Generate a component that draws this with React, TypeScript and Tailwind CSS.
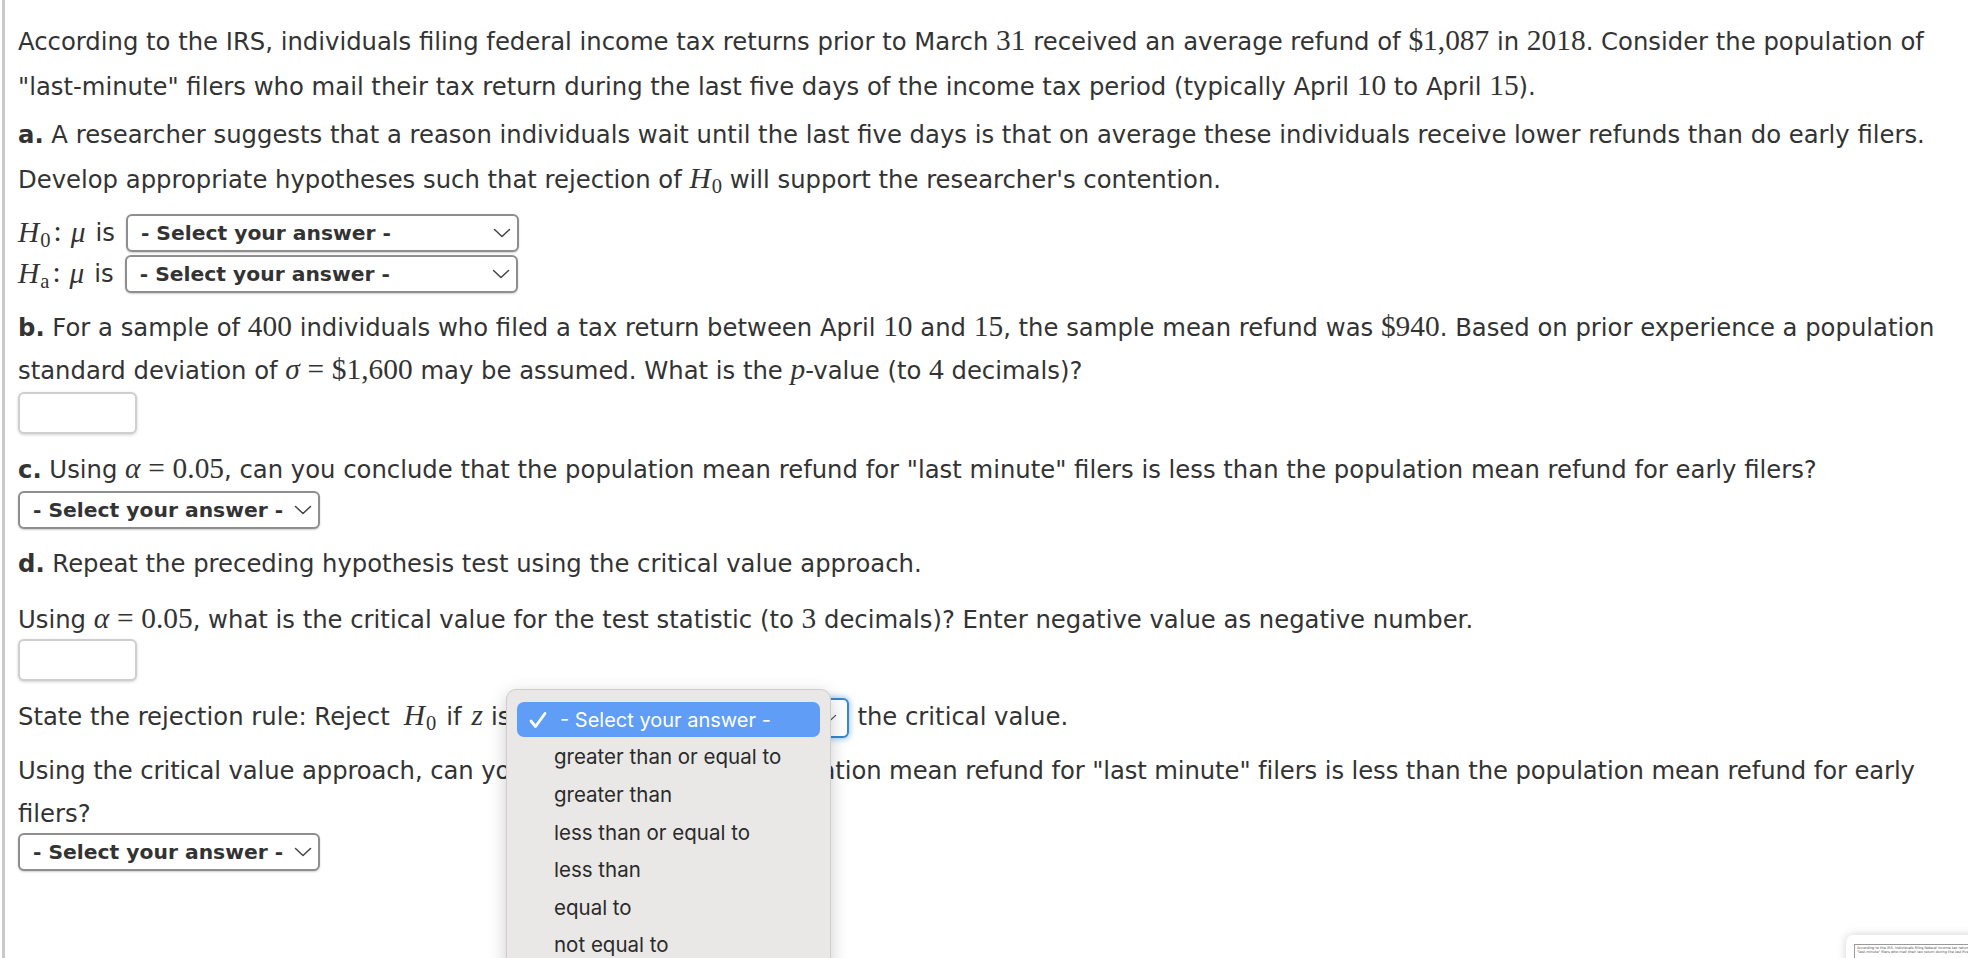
import React from "react";

const body = { fontFamily: '"DejaVu Sans", Verdana, sans-serif' };
const mathFont = { fontFamily: '"Liberation Serif", "DejaVu Serif", serif' };
const uiFont = { fontFamily: 'Inter, "Liberation Sans", sans-serif' };

// upright math (numbers, signs)
function N({ children }: { children: React.ReactNode }) {
  return (
    <span className="text-[1.21em] leading-none" style={mathFont}>
      {children}
    </span>
  );
}

// italic math variable
function V({ children, sub }: { children: React.ReactNode; sub?: string }) {
  return (
    <span className="text-[1.21em] leading-none italic" style={mathFont}>
      {children}
      {sub && <span className="not-italic text-[0.7em] relative top-[0.22em] ml-[1px]">{sub}</span>}
    </span>
  );
}

function Chevron({ className = "" }: { className?: string }) {
  return (
    <svg width="18" height="10" viewBox="0 0 18 10" className={className} fill="none">
      <path d="M1.5 1.5l7.5 7 7.5-7" stroke="#444" strokeWidth="1.5" strokeLinecap="round" strokeLinejoin="round" />
    </svg>
  );
}

function Select({ width }: { width: string }) {
  return (
    <span
      className={`inline-flex shrink-0 items-center justify-between h-[38px] ${width} rounded-[6px] border-2 border-[#8e8e8e] bg-white pl-[13px] pr-[6px] shadow-[0_1px_2px_rgba(0,0,0,0.2)]`}
    >
      <span className="font-bold text-[20.3px] text-[#333] whitespace-nowrap">- Select your answer -</span>
      <Chevron />
    </span>
  );
}

function Input() {
  return (
    <div className="w-[119px] h-[42px] rounded-[6px] border-2 border-[#cfcfcf] bg-white shadow-[0_1px_3px_rgba(0,0,0,0.18)]" />
  );
}

function HypRow({ sub }: { sub: string }) {
  return (
    <div className="h-[38px] flex items-center whitespace-nowrap">
      <V sub={sub}>H</V>
      <span className="ml-[3px] mr-[9px]">
        <N>:</N>
      </span>
      <V>μ</V>
      <span className="ml-[10px] mr-[11px]">is</span>
      <Select width="w-[393px]" />
    </div>
  );
}

const options = [
  "greater than or equal to",
  "greater than",
  "less than or equal to",
  "less than",
  "equal to",
  "not equal to",
];

export default function App() {
  return (
    <div className="relative w-[1968px] h-[958px] overflow-hidden bg-white pl-[2px] text-[#333]" style={body}>
      <div className="h-full border-l-[3px] border-[#cacaca] pl-[13px] pt-[19px] text-[24.3px]">
        <div className="leading-[45px] whitespace-nowrap">
          <div>
            According to the IRS, individuals filing federal income tax returns prior to March <N>31</N> received an
            average refund of <N>$1,087</N> in <N>2018</N>. Consider the population of
          </div>
          <div>
            "last-minute" filers who mail their tax return during the last five days of the income tax period
            (typically April <N>10</N> to April <N>15</N>).
          </div>
        </div>

        <div className="mt-[3px] leading-[45px] whitespace-nowrap">
          <div>
            <b>a.</b> A researcher suggests that a reason individuals wait until the last five days is that on average
            these individuals receive lower refunds than do early filers.
          </div>
          <div>
            Develop appropriate hypotheses such that rejection of <V sub="0">H</V> will support the researcher's
            contention.
          </div>
        </div>

        <div className="mt-[12px]">
          <HypRow sub="0" />
        </div>
        <div className="mt-[3px]">
          <HypRow sub="a" />
        </div>

        <div className="mt-[13px] leading-[43px] whitespace-nowrap">
          <div>
            <b>b.</b> For a sample of <N>400</N> individuals who filed a tax return between April <N>10</N> and{" "}
            <N>15</N>, the sample mean refund was <N>$940</N>. Based on prior experience a population
          </div>
          <div>
            standard deviation of <V>σ</V> <N>=</N> <N>$1,600</N> may be assumed. What is the <V>p</V>-value (to{" "}
            <N>4</N> decimals)?
          </div>
        </div>
        <Input />

        <div className="mt-[14px] leading-[43px] whitespace-nowrap">
          <b>c.</b> Using <V>α</V> <N>=</N> <N>0.05</N>, can you conclude that the population mean refund for "last
          minute" filers is less than the population mean refund for early filers?
        </div>
        <div className="flex">
          <Select width="w-[302px]" />
        </div>

        <div className="mt-[13px] leading-[43px] whitespace-nowrap">
          <b>d.</b> Repeat the preceding hypothesis test using the critical value approach.
        </div>
        <div className="mt-[13px] leading-[43px] whitespace-nowrap">
          Using <V>α</V> <N>=</N> <N>0.05</N>, what is the critical value for the test statistic (to <N>3</N>{" "}
          decimals)? Enter negative value as negative number.
        </div>
        <div className="-mt-[2px]">
          <Input />
        </div>

        <div className="mt-[15px] h-[43px] flex items-center whitespace-nowrap">
          <span>State the rejection rule: Reject</span>
          <span className="ml-[14px]">
            <V sub="0">H</V>
          </span>
          <span className="ml-[10px]">if</span>
          <span className="ml-[10px]">
            <V>z</V>
          </span>
          <span className="ml-[8px]">is</span>
          <span className="ml-[4px] mr-[8px] inline-flex shrink-0 items-center justify-end h-[40px] w-[335px] rounded-[6px] border-2 border-[#3a86c8] bg-white pr-[8px] shadow-[0_0_5px_2px_rgba(90,160,230,0.45)]">
            <Chevron className="scale-75" />
          </span>
          <span>the critical value.</span>
        </div>

        <div className="mt-[10px] leading-[43px] whitespace-nowrap">
          <div className="tracking-[-0.1px]">
            Using the critical value approach, can you conclude that the population mean refund for "last minute"
            filers is less than the population mean refund for early
          </div>
          <div>filers?</div>
        </div>
        <div className="mt-[-2px] flex">
          <Select width="w-[302px]" />
        </div>
      </div>

      {/* open native dropdown */}
      <div
        className="absolute left-[506px] top-[689px] w-[325px] h-[320px] rounded-[10px] border border-[#cdcdcd] bg-[#e9e8e7] pt-[12px] px-[10px] shadow-[0_5px_18px_rgba(0,0,0,0.2)]"
        style={uiFont}
      >
        <div className="flex items-center h-[35px] rounded-[7px] bg-[#5f9df6] text-white text-[20px]">
          <svg width="20" height="18" viewBox="0 0 20 18" className="ml-[11px] mr-[12px]" fill="none">
            <path d="M3 10l4.5 5.5L17 2.5" stroke="white" strokeWidth="2.8" strokeLinecap="round" strokeLinejoin="round" />
          </svg>
          <span>- Select your answer -</span>
        </div>
        {options.map((o) => (
          <div key={o} className="flex items-center h-[37.6px] pl-[37px] text-[20.5px] text-[#2a2a2a] translate-y-[2px]">
            {o}
          </div>
        ))}
      </div>

      {/* small preview thumbnail */}
      <div className="absolute left-[1846px] top-[935px] w-[140px] h-[40px] rounded-tl-[7px] bg-white shadow-[0_0_10px_rgba(0,0,0,0.18)] pl-[8px] pt-[9px]">
        <div className="border border-[#999] border-r-0 h-[30px] pl-[2px] pt-[1px] text-[3.5px] leading-[4px] text-[#555] whitespace-nowrap overflow-hidden">
          <div>According to the IRS, individuals filing federal income tax returns prior to March</div>
          <div>"last-minute" filers who mail their tax return during the last five days</div>
        </div>
      </div>
    </div>
  );
}
